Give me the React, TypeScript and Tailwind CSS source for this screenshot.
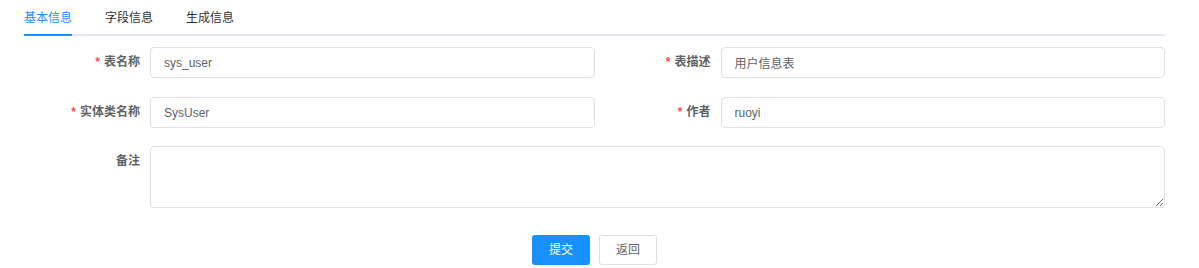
import React from "react";

const font = { fontFamily: '"Liberation Sans", "Noto Sans CJK SC", sans-serif' };

function Label({ text, required }: { text: string; required?: boolean }) {
  return (
    <label className="w-[126px] shrink-0 pr-[10px] text-right text-[12px] font-bold leading-[31px] text-[#606266]">
      {required && <span className="mr-[4px] text-[#ff4949]">*</span>}
      {text}
    </label>
  );
}

function Field({ label, value }: { label: string; value: string }) {
  return (
    <div className="flex flex-1 items-start">
      <Label text={label} required />
      <input
        readOnly
        value={value}
        className="h-[31px] min-w-0 flex-1 rounded-[4px] border border-[#dcdfe6] bg-white px-[13px] text-[12px] text-[#606266] outline-none"
        style={font}
      />
    </div>
  );
}

export default function App() {
  return (
    <div className="min-h-[268px] w-[1199px] bg-white" style={font}>
      <div className="ml-[24px] w-[1141px]">
        <div className="relative flex h-[36px] border-b-2 border-[#e4e7ed]">
          <div className="relative flex items-center pr-[16px] pt-[2px] text-[12px] text-[#1890ff]">
            基本信息
            <div className="absolute bottom-[-2px] left-0 right-[16px] h-[2px] bg-[#1890ff]" />
          </div>
          <div className="flex items-center pl-[17px] pr-[16px] pt-[2px] text-[12px] text-[#303133]">字段信息</div>
          <div className="flex items-center pl-[17px] pr-[16px] pt-[2px] text-[12px] text-[#303133]">生成信息</div>
        </div>

        <div className="mt-[11px] flex">
          <Field label="表名称" value="sys_user" />
          <Field label="表描述" value="用户信息表" />
        </div>
        <div className="mt-[19px] flex">
          <Field label="实体类名称" value="SysUser" />
          <Field label="作者" value="ruoyi" />
        </div>
        <div className="mt-[18px] flex items-start">
          <Label text="备注" />
          <textarea
            readOnly
            className="h-[62px] min-w-0 flex-1 resize-y rounded-[4px] border border-[#dcdfe6] bg-white px-[13px] py-[5px] text-[12px] text-[#606266] outline-none"
            style={font}
          />
        </div>
        <div className="mt-[27px] flex justify-center gap-[9px]">
          <button className="h-[30px] w-[58px] rounded-[3px] bg-[#1890ff] text-[12px] text-white" style={font}>
            提交
          </button>
          <button
            className="h-[30px] w-[58px] rounded-[3px] border border-[#dcdfe6] bg-white text-[12px] text-[#606266]"
            style={font}
          >
            返回
          </button>
        </div>
      </div>
    </div>
  );
}
